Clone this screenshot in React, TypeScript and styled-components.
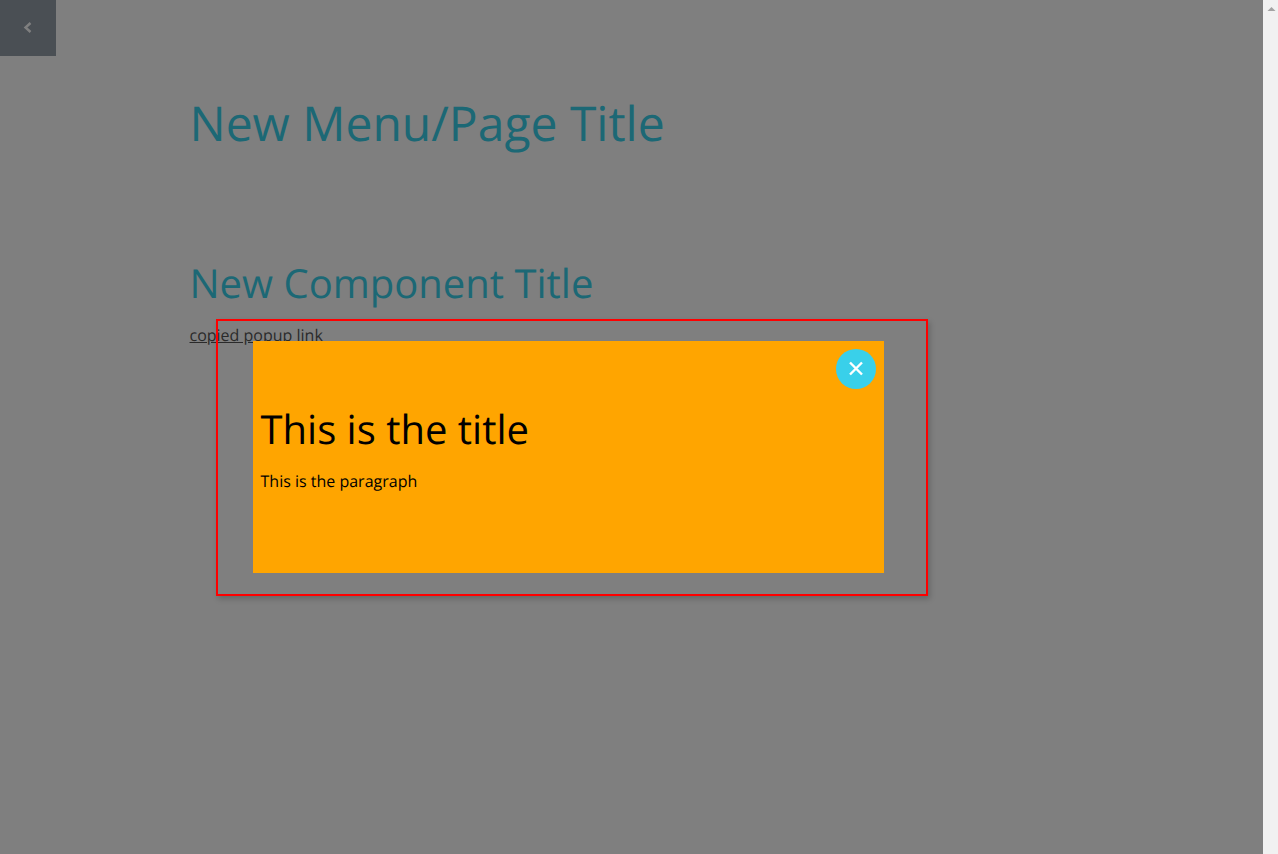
import {createGlobalStyle} from 'styled-components'
import styled from 'styled-components'

const Global = createGlobalStyle`
    html, body {
        overflow: hidden;
    }
    body {
        margin: 0;
        background: #ffffff;
        color: #333333;
        font-family: 'Open Sans', sans-serif;
        font-size: 16px;
        line-height: 24px;
        text-rendering: geometricPrecision;
    }
`
const BackButton = styled.a`
    position: fixed;
    top: 0;
    left: 0;
    width: 56px;
    height: 56px;
    display: flex;
    justify-content: center;
    align-items: center;
    background: #949ea9;
    color: #ffffff;
`
const Page = styled.main`
    width: 898px;
    margin-left: 189.5px;
    padding-top: 91px;
    min-height: 700px;
`
const PageTitle = styled.h1`
    margin: 0 0 98px;
    font-size: 48px;
    line-height: 66px;
    font-weight: 400;
    color: #39d0ea;
`
const SectionTitle = styled.h2`
    margin: 0 0 13px;
    font-size: 40px;
    line-height: 55px;
    font-weight: 400;
    color: #39d0ea;
`
const PopupLink = styled.a`
    color: #555555;
    text-decoration: underline;
`
const Overlay = styled.div`
    position: fixed;
    top: 0;
    bottom: 0;
    left: 0;
    right: 15px;
    background: rgba(0, 0, 0, 0.5);
`
const Scrollbar = styled.div`
    position: fixed;
    top: 0;
    bottom: 0;
    right: 0;
    width: 15px;
    background: #f1f1f1;
`
const ScrollArrow = styled.svg`
    display: block;
    margin: 6px 0 0 4px;
`
const Frame = styled.div`
    position: absolute;
    top: 319px;
    left: 216px;
    box-sizing: border-box;
    width: 712px;
    height: 277px;
    padding: 20px 42px 21px 35px;
    border: 2px solid #ff0000;
    box-shadow: 2px 3px 6px rgba(0, 0, 0, 0.2);
`
const Popup = styled.section`
    position: relative;
    box-sizing: border-box;
    height: 100%;
    padding: 60px 7.5px 0;
    background: #ffa500;
    color: #000000;
`
const CloseButton = styled.button`
    position: absolute;
    top: 8px;
    right: 8px;
    width: 40px;
    height: 40px;
    padding: 0;
    display: flex;
    justify-content: center;
    align-items: center;
    border: 0;
    border-radius: 50%;
    background: #39d0ea;
    color: #ffffff;
`
const PopupTitle = styled.h2`
    margin: 0 0 13px;
    font-size: 40px;
    line-height: 55px;
    font-weight: 400;
`
const PopupText = styled.p`
    margin: 0;
`

export default function App() {
    return (
        <>
            <Global />
            <BackButton>
                <svg width="10" height="14" viewBox="0 0 10 14">
                    <path d="M7.5 2 L2.5 6.5 L7.5 11" fill="none" stroke="currentColor" strokeWidth="2.4" />
                </svg>
            </BackButton>
            <Page>
                <PageTitle>New Menu/Page Title</PageTitle>
                <SectionTitle>New Component Title</SectionTitle>
                <PopupLink>copied popup link</PopupLink>
            </Page>
            <Overlay />
            <Scrollbar>
                <ScrollArrow width="9" height="6" viewBox="0 0 9 6">
                    <path d="M4.5 1 L8.5 5 H0.5 Z" fill="#a3a3a3" />
                </ScrollArrow>
            </Scrollbar>
            <Frame>
                <Popup>
                    <CloseButton>
                        <svg width="16" height="16" viewBox="0 0 16 16">
                            <path d="M2 1.5 L14 13.5 M14 1.5 L2 13.5" stroke="currentColor" strokeWidth="2.4" />
                        </svg>
                    </CloseButton>
                    <PopupTitle>This is the title</PopupTitle>
                    <PopupText>This is the paragraph</PopupText>
                </Popup>
            </Frame>
        </>
    )
}
